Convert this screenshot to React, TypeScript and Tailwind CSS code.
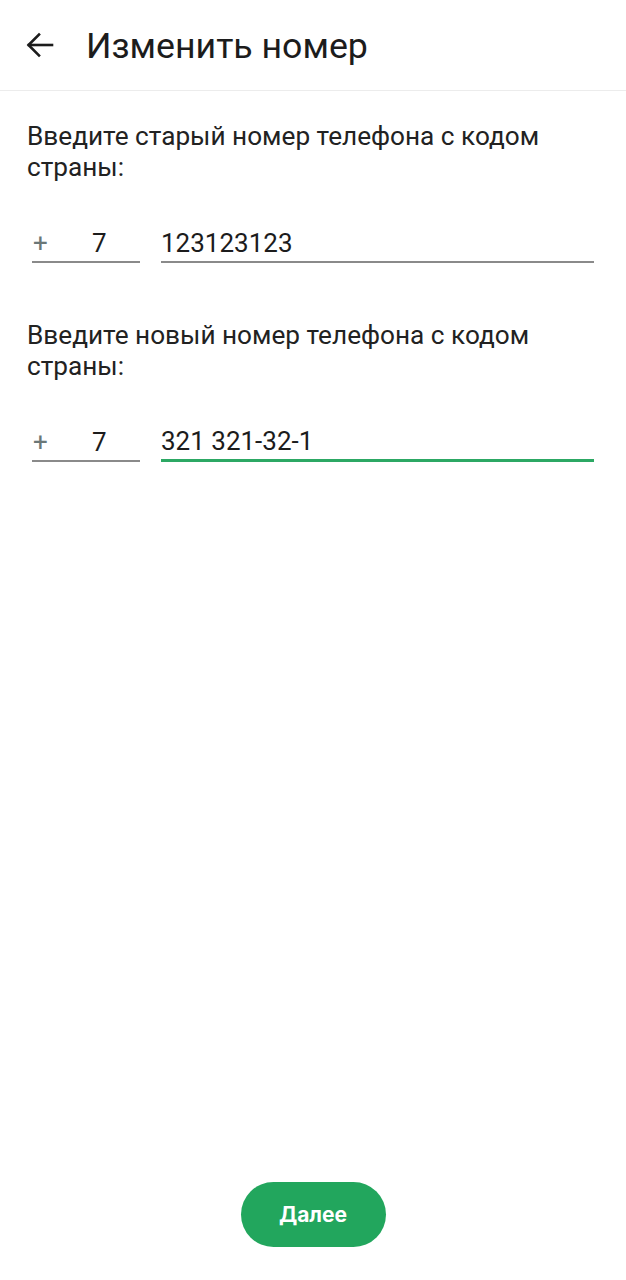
import React from "react";

function BackArrow() {
  return (
    <svg width="28" height="26" viewBox="0 0 28 26" fill="none" stroke="#1c1c1c" strokeWidth="2.6" strokeLinecap="square">
      <path d="M3 13 H26" />
      <path d="M13 2.5 L2.5 13 L13 23.5" strokeLinejoin="miter" />
    </svg>
  );
}

function PhoneRow({ value, active }: { value: string; active?: boolean }) {
  return (
    <div className="flex items-end pl-[5px] pr-[5px]">
      <div className="w-[108px] flex flex-col">
        <div className="flex items-center h-[32px] text-[26px] leading-[32px]">
          <span className="text-[#6b7777] w-[16px] pl-[1px]">+</span>
          <span className="ml-[44px] text-[#1c1c1c]">7</span>
        </div>
        <div className="mt-[2px] h-[2px] bg-[#8a8a8a]" />
      </div>
      <div className="ml-[21px] flex-1 flex flex-col">
        <div className="h-[32px] text-[26px] leading-[32px] text-[#1c1c1c]">{value}</div>
        {active ? (
          <div className="mt-[2px] h-[3px] bg-[#2ca864]" />
        ) : (
          <div className="mt-[2px] h-[2px] bg-[#8a8a8a]" />
        )}
      </div>
    </div>
  );
}

export default function App() {
  return (
    <div
      className="w-[626px] h-[1280px] bg-white flex flex-col"
      style={{ fontFamily: "Roboto, 'Noto Sans', sans-serif" }}
    >
      <header className="h-[91px] flex items-center border-b border-[#ececec] shrink-0">
        <div className="ml-[26px] flex items-center">
          <BackArrow />
        </div>
        <h1 className="ml-[32px] text-[35.7px] leading-[42px] text-[#1c1c1c] font-normal mt-[1px]">
          Изменить номер
        </h1>
      </header>

      <main className="flex-1 flex flex-col px-[27px] pt-[30px]">
        <p className="text-[26.2px] leading-[31px] text-[#222]">
          Введите старый номер телефона с кодом страны:
        </p>
        <div className="mt-[44px]">
          <PhoneRow value="123123123" />
        </div>

        <p className="mt-[57px] text-[26.2px] leading-[31px] text-[#222]">
          Введите новый номер телефона с кодом страны:
        </p>
        <div className="mt-[43px]">
          <PhoneRow value="321 321-32-1" active />
        </div>

        <div className="flex-1" />
        <div className="flex justify-center pb-[33px]">
          <button
            className="w-[145px] h-[65px] rounded-full bg-[#22a65d] text-white text-[21px] font-bold"
            style={{ fontFamily: "Inter, Roboto, sans-serif" }}
          >
            Далее
          </button>
        </div>
      </main>
    </div>
  );
}
